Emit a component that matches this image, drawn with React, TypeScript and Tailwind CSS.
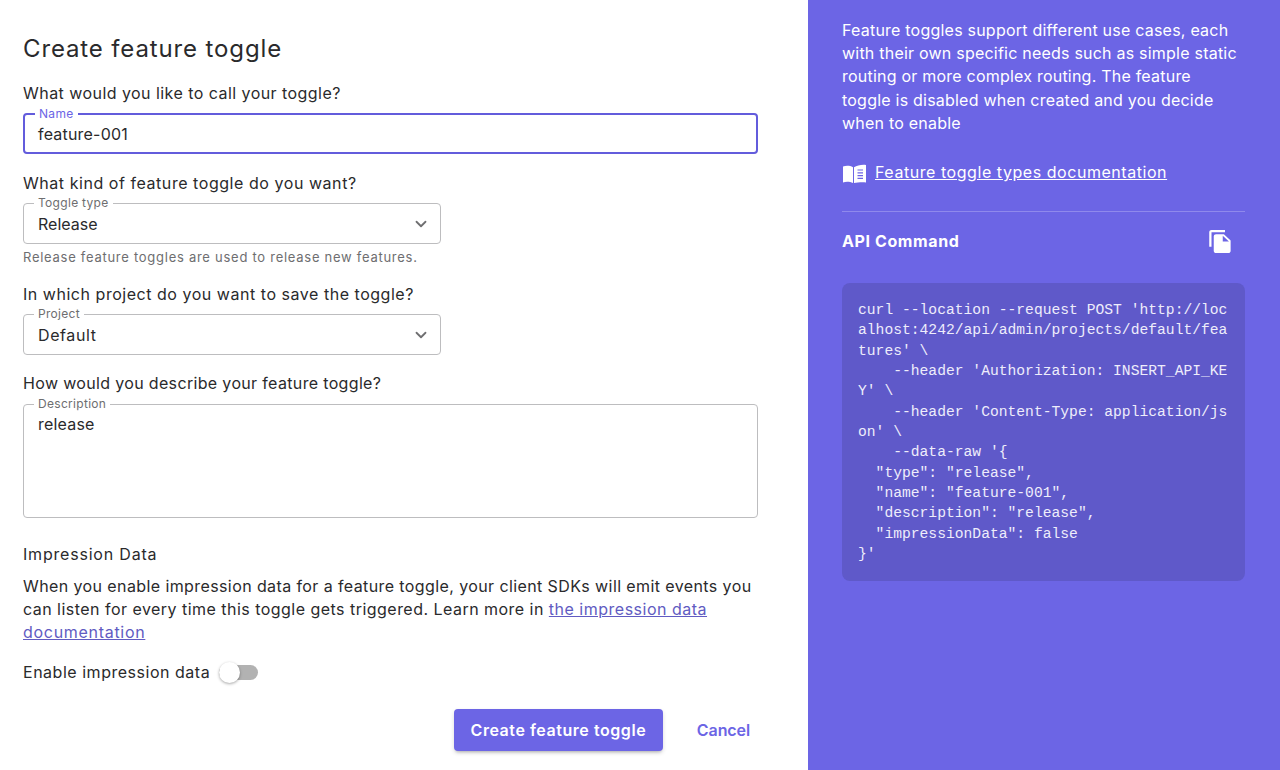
import { ChevronDown } from "lucide-react";
import type { ReactNode } from "react";

const code = `curl --location --request POST 'http://loc
alhost:4242/api/admin/projects/default/fea
tures' \\
    --header 'Authorization: INSERT_API_KE
Y' \\
    --header 'Content-Type: application/js
on' \\
    --data-raw '{
  "type": "release",
  "name": "feature-001",
  "description": "release",
  "impressionData": false
}'`;

function Question({ children, className }: { children: ReactNode; className: string }) {
  return <p className={`text-[16px] leading-[20px] text-[#2a2a2c] ${className}`}>{children}</p>;
}

/** Outlined field with a label sitting in a gap of the top border. */
function Legend({ children, color = "text-[#6e6e70]" }: { children: ReactNode; color?: string }) {
  return (
    <span className={`absolute -top-[8px] left-[10px] bg-white px-[4px] text-[12px] leading-[14px] tracking-[0.3px] ${color}`}>
      {children}
    </span>
  );
}

function SelectField({ label, value, spacing }: { label: string; value: string; spacing: string }) {
  return (
    <div className="relative flex h-[41px] w-[418px] items-center justify-between rounded-[4px] border border-[#bdbdbf] pl-[14px] pr-[10px]">
      <Legend>{label}</Legend>
      <span className={`text-[16px] text-[#2a2a2c] ${spacing}`}>{value}</span>
      <ChevronDown size={18} strokeWidth={2.4} className="text-[#6f6f71]" />
    </div>
  );
}

function BookIcon() {
  return (
    <svg width="24" height="24" viewBox="0 0 24 24" className="shrink-0 fill-white">
      <path d="M1 6.500c3-1 7-1 10 .8V23c-3-1.400-7-1.500-10-.6V6.500z" />
      <path d="M12 7.300c3-1.800 7.500-2.800 12-2.300v17.500c-4.500-.4-9 .1-12 .5V7.300z" />
      <path d="M15.500 10h5.500M15.500 12.800h5.500M15.500 15.600h5.500M15.500 18.400h5.500" stroke="#6c65e5" strokeWidth="1.200" fill="none" />
    </svg>
  );
}

export default function App() {
  return (
    <div className="flex h-[770px] w-[1280px] overflow-hidden bg-white font-['Inter','Open_Sans',sans-serif]">
      <main className="flex w-[808px] flex-col pl-[23px] pr-[50px]">
        <h1 className="mt-[33px] text-[24px] leading-[31px] tracking-[0.87px] text-[#2a2a2c]">Create feature toggle</h1>
        <Question className="mt-[19px] tracking-[0.45px]">What would you like to call your toggle?</Question>

        <div className="relative mt-[10px] flex h-[41px] w-[735px] items-center rounded-[4px] border-2 border-[#635cdc] pl-[13px]">
          <Legend color="text-[#6c65e5]">Name</Legend>
          <span className="text-[16px] tracking-[0.2px] text-[#2a2a2c]">feature-001</span>
        </div>

        <Question className="mt-[19px] tracking-[0.55px]">What kind of feature toggle do you want?</Question>
        <div className="mt-[10px]">
          <SelectField label="Toggle type" value="Release" spacing="tracking-[0px]" />
        </div>
        <p className="mt-[5px] text-[13px] leading-[16px] tracking-[0.73px] text-[#6e6e70]">
          Release feature toggles are used to release new features.
        </p>

        <Question className="mt-[19px] tracking-[0.53px]">In which project do you want to save the toggle?</Question>
        <div className="mt-[10px]">
          <SelectField label="Project" value="Default" spacing="tracking-[0.6px]" />
        </div>

        <Question className="mt-[18px] tracking-[0.34px]">How would you describe your feature toggle?</Question>
        <div className="relative mt-[11px] h-[114px] w-[735px] rounded-[4px] border border-[#bdbdbf] pl-[14px] pt-[7px]">
          <Legend>Description</Legend>
          <span className="text-[16px] leading-[22px] tracking-[0.2px] text-[#2a2a2c]">release</span>
        </div>

        <p className="mt-[26px] text-[16px] leading-[20px] tracking-[0.8px] text-[#2a2a2c]">Impression Data</p>
        <p className="mt-[11px] text-[16px] leading-[23px] tracking-[0.4px] text-[#2a2a2c]">
          When you enable impression data for a feature toggle, your client SDKs will emit events you
          <br />
          <span className="tracking-[0.47px]">can listen for every time this toggle gets triggered. Learn more in </span>
          <a className="tracking-[0.5px] text-[#615bc2] underline">the impression data</a>
          <br />
          <a className="tracking-[0.7px] text-[#615bc2] underline">documentation</a>
        </p>

        <div className="mt-[16px] flex h-[24px] items-center">
          <span className="text-[16px] tracking-[0.52px] text-[#2a2a2c]">Enable impression data</span>
          <div className="relative ml-[9px] h-[15px] w-[39px] rounded-full bg-[#b2b2b2]">
            <span className="absolute -top-[3px] left-0 h-[21px] w-[21px] rounded-full bg-white shadow-[0_1px_3px_rgba(0,0,0,0.35)]" />
          </div>
        </div>

        <div className="mt-[25px] flex items-center justify-end pr-[8px]">
          <button className="h-[42px] w-[209px] rounded-[4px] bg-[#6c65e5] text-[16px] font-semibold tracking-[0.55px] text-white shadow-[0_3px_3px_-2px_rgba(0,0,0,0.2),0_2px_4px_rgba(0,0,0,0.14)]">
            Create feature toggle
          </button>
          <a className="ml-[34px] text-[16px] font-semibold tracking-[-0.1px] text-[#6c65e5]">Cancel</a>
        </div>
      </main>

      <aside className="flex w-[472px] flex-col bg-[#6c65e5] pl-[34px] pr-[35px] text-white">
        <p className="mt-[18.700px] text-[16px] leading-[23.300px] tracking-[0.22px]">
          Feature toggles support different use cases, each
          <br />
          with their own specific needs such as simple static
          <br />
          routing or more complex routing. The feature
          <br />
          toggle is disabled when created and you decide
          <br />
          when to enable
        </p>
        <div className="mt-[25.300px] flex h-[24px] items-center gap-[9px]">
          <BookIcon />
          <a className="text-[16px] tracking-[0.55px] underline">Feature toggle types documentation</a>
        </div>
        <div className="mt-[27px] border-t border-[#8f89ec]" />
        <div className="mt-[17px] flex h-[24px] items-center justify-between pr-[11px]">
          <span className="text-[16px] font-bold tracking-[0.6px]">API Command</span>
          <svg width="27" height="25" viewBox="0 0 24 24" preserveAspectRatio="none" className="fill-white">
            <path d="M16 1H4c-1.100 0-2 .9-2 2v14h2V3h12V1zm-1 4 6 6v10c0 1.100-.9 2-2 2H7.990C6.890 23 6 22.100 6 21l.01-14c0-1.100.89-2 1.990-2h7zm-1 7h5.500L14 6.500V12z" />
          </svg>
        </div>
        <pre className="mt-[30px] h-[298px] rounded-[8px] bg-[#5f59c9] pl-[16px] pt-[16.500px] font-['Liberation_Mono',monospace] text-[14.670px] leading-[20.350px] text-[#eeedfb]">
          {code}
        </pre>
      </aside>
    </div>
  );
}
